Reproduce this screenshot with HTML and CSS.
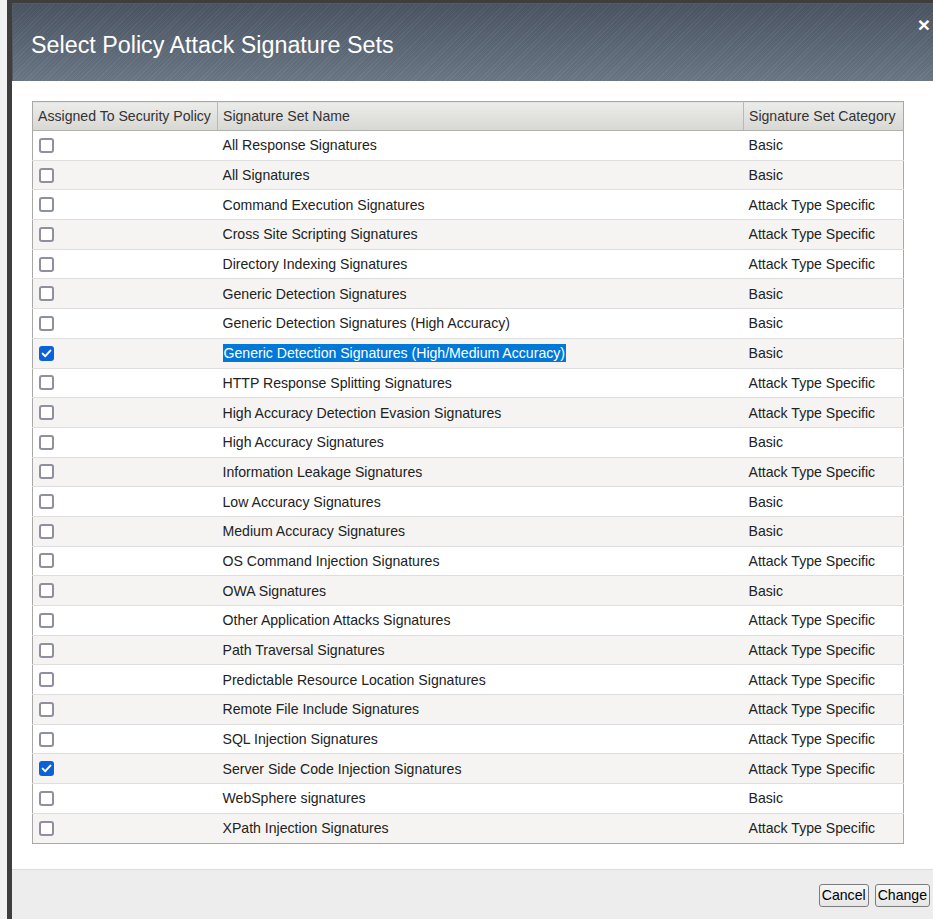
FILE: index.html
```html
<!DOCTYPE html>
<html lang="en">
<head>
<meta charset="utf-8">
<title>Select Policy Attack Signature Sets</title>
<link rel="stylesheet" href="styles.css">
</head>
<body>
<div class="page">
  <div class="dialog">
    <div class="dialog-head">
      <h1 class="dialog-title">Select Policy Attack Signature Sets</h1>
      <span class="dialog-close">&times;</span>
    </div>
    <div class="dialog-body">
      <table class="sets">
        <colgroup>
          <col class="c-assigned">
          <col class="c-name">
          <col class="c-category">
        </colgroup>
        <thead>
          <tr>
            <th>Assigned To Security Policy</th>
            <th>Signature Set Name</th>
            <th>Signature Set Category</th>
          </tr>
        </thead>
        <tbody>
          <tr><td><span class="cb"></span></td><td>All Response Signatures</td><td>Basic</td></tr>
          <tr><td><span class="cb"></span></td><td>All Signatures</td><td>Basic</td></tr>
          <tr><td><span class="cb"></span></td><td>Command Execution Signatures</td><td>Attack Type Specific</td></tr>
          <tr><td><span class="cb"></span></td><td>Cross Site Scripting Signatures</td><td>Attack Type Specific</td></tr>
          <tr><td><span class="cb"></span></td><td>Directory Indexing Signatures</td><td>Attack Type Specific</td></tr>
          <tr><td><span class="cb"></span></td><td>Generic Detection Signatures</td><td>Basic</td></tr>
          <tr><td><span class="cb"></span></td><td>Generic Detection Signatures (High Accuracy)</td><td>Basic</td></tr>
          <tr><td><span class="cb is-checked"><svg viewBox="0 0 15 15"><path d="M3.6 7.6 L6.3 10.2 L11.4 4.6" /></svg></span></td><td><span class="selected-text">Generic Detection Signatures (High/Medium Accuracy)</span></td><td>Basic</td></tr>
          <tr><td><span class="cb"></span></td><td>HTTP Response Splitting Signatures</td><td>Attack Type Specific</td></tr>
          <tr><td><span class="cb"></span></td><td>High Accuracy Detection Evasion Signatures</td><td>Attack Type Specific</td></tr>
          <tr><td><span class="cb"></span></td><td>High Accuracy Signatures</td><td>Basic</td></tr>
          <tr><td><span class="cb"></span></td><td>Information Leakage Signatures</td><td>Attack Type Specific</td></tr>
          <tr><td><span class="cb"></span></td><td>Low Accuracy Signatures</td><td>Basic</td></tr>
          <tr><td><span class="cb"></span></td><td>Medium Accuracy Signatures</td><td>Basic</td></tr>
          <tr><td><span class="cb"></span></td><td>OS Command Injection Signatures</td><td>Attack Type Specific</td></tr>
          <tr><td><span class="cb"></span></td><td>OWA Signatures</td><td>Basic</td></tr>
          <tr><td><span class="cb"></span></td><td>Other Application Attacks Signatures</td><td>Attack Type Specific</td></tr>
          <tr><td><span class="cb"></span></td><td>Path Traversal Signatures</td><td>Attack Type Specific</td></tr>
          <tr><td><span class="cb"></span></td><td>Predictable Resource Location Signatures</td><td>Attack Type Specific</td></tr>
          <tr><td><span class="cb"></span></td><td>Remote File Include Signatures</td><td>Attack Type Specific</td></tr>
          <tr><td><span class="cb"></span></td><td>SQL Injection Signatures</td><td>Attack Type Specific</td></tr>
          <tr><td><span class="cb is-checked"><svg viewBox="0 0 15 15"><path d="M3.6 7.6 L6.3 10.2 L11.4 4.6" /></svg></span></td><td>Server Side Code Injection Signatures</td><td>Attack Type Specific</td></tr>
          <tr><td><span class="cb"></span></td><td>WebSphere signatures</td><td>Basic</td></tr>
          <tr><td><span class="cb"></span></td><td>XPath Injection Signatures</td><td>Attack Type Specific</td></tr>
        </tbody>
      </table>
    </div>
    <div class="dialog-foot">
      <button class="btn" type="button">Cancel</button>
      <button class="btn" type="button">Change</button>
    </div>
  </div>
</div>
</body>
</html>
```

FILE: styles.css
```css
* {
  box-sizing: border-box;
}

html, body {
  margin: 0;
  height: 100%;
}

body {
  background: #f2f2f2;
  font-family: "Liberation Sans", Arial, sans-serif;
  overflow: hidden;
}

.page {
  height: 919px;
  padding-left: 7px;
  display: flex;
}

/* modal window */
.dialog {
  width: 926px;
  height: 100%;
  display: flex;
  flex-direction: column;
  background: #fff;
  border-left: 5px solid #3e3e3e;
  border-top: 3px solid #3e3e3e;
}

.dialog-head {
  height: 78px;
  flex: none;
  display: flex;
  justify-content: space-between;
  align-items: flex-start;
  padding: 0 3px 0 18px;
  background:
    repeating-linear-gradient(-45deg, rgba(255, 255, 255, 0.035) 0 1px, rgba(0, 0, 0, 0.03) 1px 3px),
    linear-gradient(#4b5562, #6c7888);
  border-left: 1px solid #555b62;
  border-top: 1px solid #555b62;
}

.dialog-title {
  margin: 0;
  padding-top: 28px;
  font-weight: normal;
  font-size: 23.3px;
  line-height: 26px;
  color: #fff;
}

.dialog-close {
  margin-top: 11px;
  font-size: 21px;
  font-weight: bold;
  line-height: 20px;
  color: #fff;
}

.dialog-body {
  flex: none;
  padding: 20px 0 25px 20px;
}

/* signature set grid */
.sets {
  width: 871px;
  border-collapse: collapse;
  table-layout: fixed;
  border: 1px solid #a8a8a8;
  font-size: 14.1px;
  color: #222;
}

.c-assigned { width: 185px; }
.c-name { width: 526px; }
.c-category { width: 160px; }

.sets th {
  height: 29px;
  padding: 0 5px;
  text-align: left;
  font-weight: normal;
  color: #333;
  white-space: nowrap;
  background: linear-gradient(#ececea, #d7d7d4);
  border-left: 1px solid #b8b8b5;
  border-bottom: 1px solid #b0b0ad;
}

.sets th:first-child {
  border-left: none;
}

.sets td {
  height: 29.7px;
  padding: 0 5px;
  vertical-align: middle;
  white-space: nowrap;
  border-top: 1px solid #dedede;
}

.sets td:first-child {
  padding-left: 6px;
}

.sets tbody tr:nth-child(even) td {
  background: #f5f4f2;
}

.cb {
  display: block;
  width: 15px;
  height: 15px;
  border: 2px solid #8f8f9d;
  border-radius: 3px;
  background: #fff;
}

.cb.is-checked {
  border: none;
  background: #0b62d6;
}

.cb svg {
  display: block;
  width: 15px;
  height: 15px;
}

.cb svg path {
  fill: none;
  stroke: #fff;
  stroke-width: 2;
  stroke-linecap: round;
  stroke-linejoin: round;
}

.selected-text {
  background: #0078d7;
  color: #fff;
  padding: 1px 1px;
}

.dialog-foot {
  flex: 1;
  display: flex;
  justify-content: flex-end;
  align-items: flex-start;
  gap: 6px;
  padding: 14px 3px 0 0;
  background: #ededed;
  border-top: 1px solid #dcdcdc;
}

.btn {
  height: 23px;
  padding: 0 2px;
  font-family: "Liberation Sans", Arial, sans-serif;
  font-size: 14.1px;
  color: #000;
  background: linear-gradient(#f6f6f6, #e6e6e6);
  border: 1px solid #7c7c7c;
  border-radius: 3px;
}
```
